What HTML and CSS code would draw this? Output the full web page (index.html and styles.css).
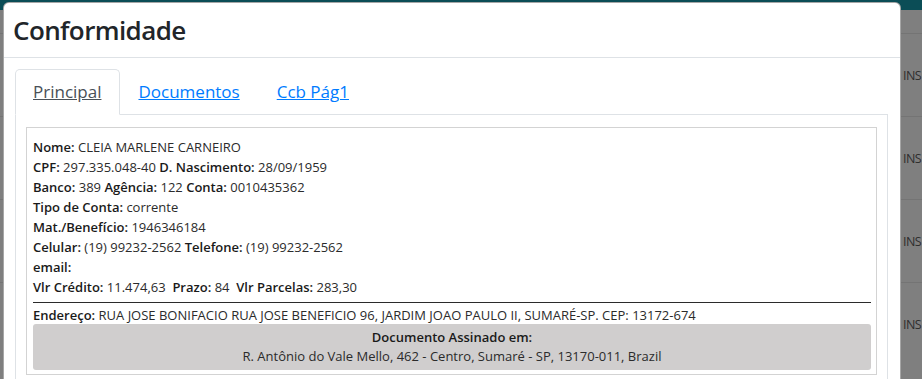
FILE: index.html
```html
<!DOCTYPE html>
<html lang="pt-BR">
<head>
<meta charset="utf-8">
<title>Conformidade</title>
<link rel="stylesheet" href="styles.css">
</head>
<body>
<div class="page">
  <div class="topbar"></div>
  <div class="rows">
    <div class="row"><span class="cell">INS</span></div>
    <div class="row"><span class="cell">INS</span></div>
    <div class="row"><span class="cell">INS</span></div>
    <div class="row"><span class="cell">INS</span></div>
  </div>
</div>

<div class="modal">
  <div class="modal-header">
    <h4 class="modal-title">Conformidade</h4>
  </div>
  <div class="modal-body">
    <ul class="nav-tabs">
      <li><a class="tab active" href="#">Principal</a></li>
      <li><a class="tab" href="#">Documentos</a></li>
      <li><a class="tab" href="#">Ccb Pág1</a></li>
    </ul>
    <div class="tab-content">
      <div class="info-box">
        <div class="line"><b>Nome:</b> CLEIA MARLENE CARNEIRO</div>
        <div class="line"><b>CPF:</b> 297.335.048-40 <b>D. Nascimento:</b> 28/09/1959</div>
        <div class="line"><b>Banco:</b> 389 <b>Agência:</b> 122 <b>Conta:</b> 0010435362</div>
        <div class="line"><b>Tipo de Conta:</b> corrente</div>
        <div class="line"><b>Mat./Benefício:</b> 1946346184</div>
        <div class="line"><b>Celular:</b> (19) 99232-2562 <b>Telefone:</b> (19) 99232-2562</div>
        <div class="line"><b>email:</b></div>
        <div class="line"><b>Vlr Crédito:</b> 11.474,63&nbsp; <b>Prazo:</b> 84&nbsp; <b>Vlr Parcelas:</b> 283,30</div>
        <hr class="sep">
        <div class="address"><b>Endereço:</b> RUA JOSE BONIFACIO RUA JOSE BENEFICIO 96, JARDIM JOAO PAULO II, SUMARÉ-SP. CEP: 13172-674</div>
        <div class="signed">
          <div class="signed-title">Documento Assinado em:</div>
          <div class="signed-place">R. Antônio do Vale Mello, 462 - Centro, Sumaré - SP, 13170-011, Brazil</div>
        </div>
      </div>
    </div>
  </div>
</div>
</body>
</html>
```

FILE: styles.css
```css
html, body {
  margin: 0;
  padding: 0;
  height: 100%;
  overflow: hidden;
}
body {
  background: #7f7f7f;
  font-family: "Open Sans", "Noto Sans", sans-serif;
  color: #212529;
}
.page {
  height: 100%;
}
.topbar {
  height: 10px;
  background: #0b4d56;
}
.rows {
  padding-top: 23px;
}
.row {
  height: 82px;
  border-top: 1px solid #747474;
  display: flex;
  align-items: center;
  padding-left: 903px;
}
.cell {
  white-space: nowrap;
  font-size: 12.5px;
  letter-spacing: -0.6px;
  color: #2e2e2e;
}

.modal {
  position: absolute;
  left: 3px;
  top: 2px;
  width: 896px;
  height: 420px;
  background: #fff;
  border: 1px solid rgba(0, 0, 0, 0.35);
  border-radius: 6px;
  box-sizing: content-box;
}
.modal-header {
  height: 55px;
  box-sizing: border-box;
  padding: 0 0 0 9px;
  border-bottom: 1px solid #dee2e6;
  display: flex;
  align-items: center;
}
.modal-title {
  margin: 0;
  font-size: 26px;
  font-weight: 600;
  line-height: 32px;
  color: #212529;
  letter-spacing: -0.6px;
}
.modal-body {
  padding: 11px 12px 0 11px;
}
.nav-tabs {
  list-style: none;
  margin: 0;
  padding: 0;
  display: flex;
  border-bottom: 1px solid #dee2e6;
}
.tab {
  display: block;
  height: 46px;
  box-sizing: border-box;
  margin-bottom: -1px;
  padding: 8px 18px 0 17px;
  line-height: 28px;
  font-size: 17px;
  color: #007bff;
  border: 1px solid transparent;
  border-top-left-radius: 5px;
  border-top-right-radius: 5px;
}
.tab.active {
  color: #495057;
  background: #fff;
  border-color: #dee2e6 #dee2e6 #fff;
}
.tab-content {
  border: 1px solid #dee2e6;
  border-top: none;
  padding: 12px 10px 10px 10px;
}
.info-box {
  border: 1px solid #d3d3d3;
  padding: 9px 5px 4px 6px;
  font-size: 13px;
  color: #2b2b2b;
}
.line {
  line-height: 20px;
}
.line b, .address b {
  font-weight: 600;
  color: #1a1a1a;
}
.sep {
  margin: 5px 0 3px 0;
  border: none;
  border-top: 1px solid #2b2b2b;
  height: 0;
}
.address {
  line-height: 18px;
}
.signed {
  background: #d0cece;
  border-radius: 3px;
  padding: 4px 0;
  text-align: center;
  line-height: 19px;
}
.signed-title {
  font-weight: 600;
  color: #1a1a1a;
}
```
